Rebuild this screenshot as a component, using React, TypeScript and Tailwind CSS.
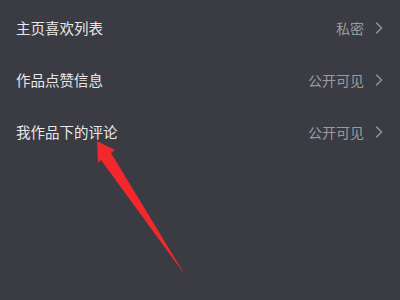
import React from "react";

const rows = [
  { label: "主页喜欢列表", value: "私密" },
  { label: "作品点赞信息", value: "公开可见" },
  { label: "我作品下的评论", value: "公开可见" },
];

function Chevron() {
  return (
    <svg width="8" height="12" viewBox="0 0 8 12" fill="none" className="shrink-0">
      <path d="M1.5 1 L6.5 6 L1.5 11" stroke="#8e8f96" strokeWidth="1.6" strokeLinecap="round" strokeLinejoin="round" />
    </svg>
  );
}

export default function App() {
  return (
    <div
      className="relative h-[300px] w-[400px] overflow-hidden bg-[#3a3b43] pt-[2px]"
      style={{ fontFamily: '"Noto Sans CJK SC", "Noto Sans", sans-serif' }}
    >
      {rows.map((row) => (
        <div key={row.label} className="flex h-[52px] items-center justify-between pl-4 pr-[17px]">
          <span className="text-[14.5px] text-[#e8e8ea]">{row.label}</span>
          <div className="flex items-center gap-[11px]">
            <span className="text-[14px] text-[#9a9ba1]">{row.value}</span>
            <Chevron />
          </div>
        </div>
      ))}
      <svg className="absolute left-0 top-0" width="400" height="300" viewBox="0 0 400 300">
        <polygon
          points="97,141 115,150 111,153 185,275 101,160 98,163"
          fill="#f2282d"
        />
      </svg>
    </div>
  );
}
